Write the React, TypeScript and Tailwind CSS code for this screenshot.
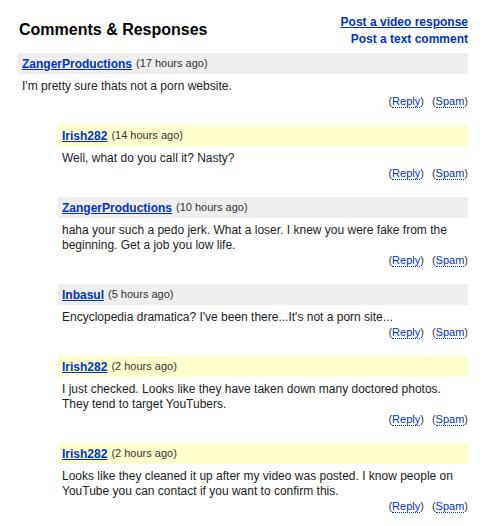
import React from 'react';

const comments = [
  { user: 'ZangerProductions', time: '17 hours ago', text: "I'm pretty sure thats not a porn website.", reply: false, bg: 'bg-[#eeeeee]' },
  { user: 'Irish282', time: '14 hours ago', text: 'Well, what do you call it? Nasty?', reply: true, bg: 'bg-[#ffffcc]' },
  { user: 'ZangerProductions', time: '10 hours ago', text: 'haha your such a pedo jerk. What a loser. I knew you were fake from the beginning. Get a job you low life.', reply: true, bg: 'bg-[#eeeeee]' },
  { user: 'Inbasul', time: '5 hours ago', text: "Encyclopedia dramatica? I've been there...It's not a porn site...", reply: true, bg: 'bg-[#eeeeee]' },
  { user: 'Irish282', time: '2 hours ago', text: 'I just checked. Looks like they have taken down many doctored photos. They tend to target YouTubers.', reply: true, bg: 'bg-[#ffffcc]' },
  { user: 'Irish282', time: '2 hours ago', text: 'Looks like they cleaned it up after my video was posted. I know people on YouTube you can contact if you want to confirm this.', reply: true, bg: 'bg-[#ffffcc]' },
];

export default function App() {
  return (
    <div className="min-h-screen bg-white text-[#333] font-['Liberation_Sans',Arial,sans-serif]">
      <div className="w-[450px] ml-[18px] pt-[14px]">
        <div className="flex justify-between items-start">
          <h2 className="text-[16px] leading-[24px] font-bold text-black mt-[4px] ml-px">Comments &amp; Responses</h2>
          <div className="flex flex-col items-end text-[12px] font-bold leading-[17px] text-[#0033cc]">
            <a href="#" className="underline">Post a video response</a>
            <a href="#">Post a text comment</a>
          </div>
        </div>
        <div className="mt-[5px]">
          {comments.map((c, i) => (
            <div key={i} className={`${c.reply ? 'ml-[40px]' : ''} mb-[17px]`}>
              <div className={`${c.bg} h-[21px] flex items-center px-[4px]`}>
                <a href="#" className="text-[12px] font-bold text-[#0033cc] underline">{c.user}</a>
                <span className="text-[11px] ml-[4px] text-[#333]">({c.time})</span>
              </div>
              <div className="text-[12px] leading-[15px] px-[4px] mt-[5px] text-[#222]">{c.text}</div>
              <div className="text-[11px] leading-[14px] text-right text-[#333]">
                (<a href="#" className="text-[#0033cc] border-b border-dotted border-[#0033cc]">Reply</a>)
                <span className="ml-[8px]">(<a href="#" className="text-[#0033cc] border-b border-dotted border-[#0033cc]">Spam</a>)</span>
              </div>
            </div>
          ))}
        </div>
      </div>
    </div>
  );
}
